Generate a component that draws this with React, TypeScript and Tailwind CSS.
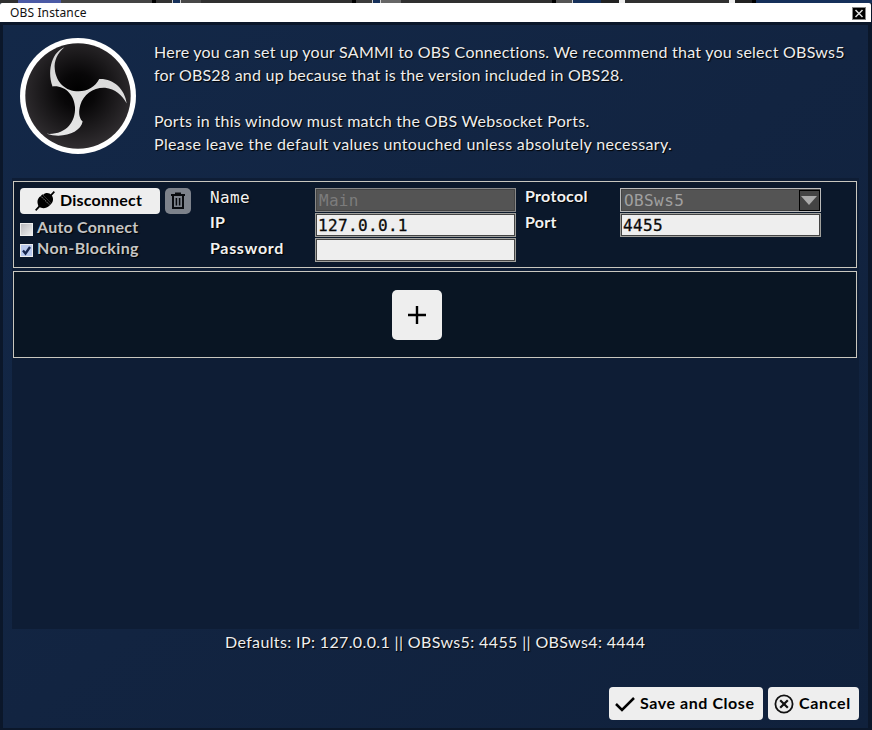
import React from 'react';

const bodyFont = "font-['Lato','Noto_Sans',sans-serif]";
const boldFont = "font-['Lato','Noto_Sans',sans-serif] font-bold";
const monoFont = "font-['DejaVu_Sans_Mono',monospace]";
const shadow = '[text-shadow:1px_1px_1px_#000]';

function ObsLogo() {
  return (
    <svg className="block h-[116px] w-[116px]" viewBox="28 23 350 350">
      <defs>
        <radialGradient id="disc" cx="50%" cy="45%" r="55%">
          <stop offset="0" stopColor="#000" />
          <stop offset="0.3" stopColor="#080708" />
          <stop offset="1" stopColor="#302d30" />
        </radialGradient>
        <linearGradient id="blade" x1="0" y1="0" x2="0" y2="1">
          <stop offset="0" stopColor="#d4d4d4" />
          <stop offset="1" stopColor="#e6e6e6" />
        </linearGradient>
      </defs>
      <circle cx="203" cy="198" r="175" fill="#fff" />
      <circle cx="203" cy="198" r="159" fill="url(#disc)" />
      <path
        d="M162 51C128 64 108 115 126 169C164 165 192 195 194 232C196 278 166 316 108 312C158 328 211 308 217 275C204 263 205 242 210 225C220 193 250 171 285 173C315 177 337 195 350 221C344 176 309 145 267 147C255 170 232 184 205 184C165 184 137 156 133 117C130 92 141 69 162 51Z"
        fill="url(#blade)"
      />
    </svg>
  );
}

function PlugIcon() {
  return (
    <svg className="h-[20px] w-[20px]" viewBox="0 0 60 60">
      <path d="M2 58L15 44M45 16L58 2" stroke="#000" strokeWidth="5" />
      <path d="M12 48C5 36 6 22 17 16L22 10L49 38L43 44C35 52 23 54 12 48Z" fill="#000" />
      <path d="M24 12C32 3 44 6 49 12C56 19 56 31 49 38Z" fill="#000" />
      <path d="M19 17L43 41" stroke="#ddd" strokeWidth="2" strokeDasharray="5 3" />
    </svg>
  );
}

function TrashIcon() {
  return (
    <svg className="h-[18px] w-[16px]" viewBox="0 0 16 18" fill="none" stroke="#080a0e">
      <path d="M1 3H15" strokeWidth="2" />
      <path d="M5 1.3H11" strokeWidth="1.6" />
      <path d="M3 4V16H13V4" strokeWidth="2" />
      <path d="M6.4 6V13.5M9.6 6V13.5" strokeWidth="1.5" />
    </svg>
  );
}

function Field({ value }: { value: string }) {
  return (
    <div
      className={`${monoFont} flex h-[24px] w-[201px] items-center border border-[#a0a09c] bg-[#eee] text-[16px] tracking-[0.35px] text-[#0a0a0a] shadow-[inset_0_0_0_1px_#444] [-webkit-text-stroke:0.3px_#0a0a0a]`}
    >
      <span className="pl-[2px] pt-px">{value}</span>
    </div>
  );
}

function Check({ on, label, tracking }: { on?: boolean; label: string; tracking: string }) {
  return (
    <div className={`flex h-[21px] items-center ${boldFont} text-[16px] text-[#c5c5c5] ${shadow}`}>
      <span
        className={`mr-1 mt-[3px] flex h-[13px] w-[13px] items-center justify-center border border-[#eee] ${on ? 'bg-[#b9c9ed]' : 'bg-gradient-to-br from-[#b9b9bd] to-[#eee]'}`}
      >
        {on && (
          <svg className="h-[11px] w-[11px]" viewBox="0 0 11 11">
            <path d="M2 5.5L4.5 8.5L9 2" fill="none" stroke="#17264e" strokeWidth="2.3" />
          </svg>
        )}
      </span>
      <span className={`-mt-px whitespace-nowrap ${tracking}`}>{label}</span>
    </div>
  );
}

export default function App() {
  return (
    <div className="flex h-[730px] w-[872px] flex-col overflow-hidden bg-[#0b172a]">
      <div className="flex h-[3px] shrink-0 bg-[#16305a]">
        <div className="w-[18px] bg-[#303030]" />
        <div className="w-[43px] bg-[#4b5aa5]" />
        <div className="w-[91px] bg-[#444]" />
        <div className="w-[20px] border-l-4 border-black bg-[#333]" />
        <div className="w-[9px] border-x border-[#ccc] bg-[#16305a]" />
        <div className="w-[20px] bg-[#484848]" />
        <div className="w-[151px] bg-[#303030]" />
        <div className="w-[20px] border-l-4 border-black bg-[#3c3c3c]" />
        <div className="w-[9px] border-x border-[#ccc] bg-[#16305a]" />
        <div className="w-[20px] bg-[#666]" />
        <div className="w-[151px] bg-[#303030]" />
        <div className="w-[20px] border-l-4 border-black bg-[#555]" />
        <div className="w-[29px] border-l border-[#ccc] bg-[#16305a]" />
        <div className="w-[18px] bg-[#222]" />
        <div className="w-[6px] bg-[#eee]" />
        <div className="w-[104px] bg-[#303030]" />
        <div className="w-[6px] bg-[#eee]" />
        <div className="w-[21px] border-r-4 border-black bg-[#222]" />
      </div>
      <div className="flex h-[19px] w-[871px] shrink-0 items-center justify-between rounded-t-[2px] bg-white pl-[10px] pr-[5px]">
        <span className="font-['Noto_Sans',sans-serif] text-[12px] leading-[19px] tracking-[0.13px] text-[#111]">OBS Instance</span>
        <span className="mt-[2px] flex h-[13px] w-[14px] items-center justify-center border border-[#888] bg-black">
          <svg className="h-[9px] w-[10px]" viewBox="0 0 10 9">
            <path d="M1.5 1L8.5 8M8.5 1L1.5 8" stroke="#ddd" strokeWidth="1.5" />
          </svg>
        </span>
      </div>
      <div className="mx-[3px] mr-[4px] mt-[3px] flex h-[703px] flex-col bg-gradient-to-br from-[#132848] via-[#122441] to-[#10213c]">
        <header className="flex h-[153px] shrink-0 pl-[17px] pt-[13px]">
          <ObsLogo />
          <div className={`${bodyFont} ml-[18px] mt-[2px] whitespace-nowrap text-[16px] leading-[23px] text-[#eee] ${shadow}`}>
            <p className="tracking-[0.24px]">Here you can set up your SAMMI to OBS Connections. We recommend that you select OBSws5</p>
            <p className="tracking-[0.22px]">for OBS28 and up because that is the version included in OBS28.</p>
            <p className="h-[23px]" />
            <p className="tracking-[0.3px]">Ports in this window must match the OBS Websocket Ports.</p>
            <p className="tracking-[0.35px]">Please leave the default values untouched unless absolutely necessary.</p>
          </div>
        </header>
        <main className="ml-[9px] flex h-[451px] w-[847px] shrink-0 flex-col gap-[3px] bg-[#0e1d35] px-px pt-[3px]">
          <section className="flex h-[87px] w-[844px] border border-[#c9c7bf] bg-[#0b182b] pl-[6px] pt-[6px]">
            <div className="w-[190px]">
              <div className="flex gap-[5px]">
                <button className={`flex h-[26px] w-[140px] items-center rounded-[4px] bg-[#eee] pl-[15px] ${boldFont} text-[16px] text-black`}>
                  <PlugIcon />
                  <span className="-mt-[2px] ml-[5px] tracking-[0.2px]">Disconnect</span>
                </button>
                <button className="flex h-[26px] w-[26px] items-center justify-center rounded-[5px] bg-[#7d828b]">
                  <TrashIcon />
                </button>
              </div>
              <div className="mt-[3px]">
                <Check label="Auto Connect" tracking="tracking-[0.22px]" />
                <Check on label="Non-Blocking" tracking="tracking-[0.35px]" />
              </div>
            </div>
            <div className={`w-[105px] ${boldFont} -mt-[5px] text-[16px] leading-[26px] text-[#f2f2f2] ${shadow}`}>
              <p className={`${monoFont} h-[26px] pt-[2px] font-normal tracking-[0.4px]`}>Name</p>
              <p className="tracking-[0.3px]">IP</p>
              <p className="tracking-[0.68px]">Password</p>
            </div>
            <div className="flex w-[210px] flex-col gap-px">
              <div className={`${monoFont} flex h-[24px] w-[201px] items-center border border-[#888] bg-[#545454] pl-[3px] pt-px text-[16px] tracking-[0.3px] text-[#7c7c7c] shadow-[inset_0_0_0_1px_#444]`}>Main</div>
              <Field value="127.0.0.1" />
              <Field value="" />
            </div>
            <div className={`w-[95px] ${boldFont} -mt-[5px] text-[16px] leading-[26px] text-[#f2f2f2] ${shadow}`}>
              <p className="tracking-[0.3px]">Protocol</p>
              <p className="tracking-[0.3px]">Port</p>
            </div>
            <div className="flex flex-col gap-px">
              <div className={`${monoFont} flex h-[24px] w-[201px] items-center justify-between border border-[#bbb] bg-[#545454] pl-[3px] text-[16px] text-[#a0a0a0] shadow-[inset_0_0_0_1px_#444]`}>
                <span className="pt-px tracking-[0.4px]">OBSws5</span>
                <span className="flex h-[21px] w-[21px] items-center justify-center border border-black bg-[#444]">
                  <svg className="mr-[2px] h-[9px] w-[16px] shrink-0" viewBox="0 0 16 9">
                    <path d="M0 0H16L8 9Z" fill="#aaa" />
                  </svg>
                </span>
              </div>
              <Field value="4455" />
            </div>
          </section>
          <section className="flex h-[87px] w-[844px] border border-[#c9c7bf] bg-[#091523] pl-[378px] pt-[18px]">
            <button className="flex h-[50px] w-[50px] items-center justify-center rounded-[5px] bg-[#eee]">
              <svg className="h-[18px] w-[18px]" viewBox="0 0 18 18">
                <path d="M0 9H18M9 0V18" stroke="#000" strokeWidth="2.4" />
              </svg>
            </button>
          </section>
        </main>
        <p className={`${bodyFont} ml-[222px] mt-px h-[24px] whitespace-nowrap text-[16px] leading-[23px] tracking-[0.37px] text-[#eee] ${shadow}`}>
          Defaults: IP: 127.0.0.1 || OBSws5: 4455 || OBSws4: 4444
        </p>
        <footer className={`mt-[33px] flex justify-end gap-[5px] pr-[9px] ${boldFont} text-[16px] text-black`}>
          <button className="flex h-[33px] w-[154px] items-center rounded-[4px] bg-[#eee] pl-[6px]">
            <svg className="h-[18px] w-[20px]" viewBox="0 0 20 18">
              <path d="M1 9L7 15L19 3" fill="none" stroke="#000" strokeWidth="2.5" />
            </svg>
            <span className="-mt-[2px] ml-[5px] whitespace-nowrap tracking-[0.56px]">Save and Close</span>
          </button>
          <button className="flex h-[33px] w-[91px] items-center rounded-[4px] bg-[#eee] pl-[6px]">
            <svg className="h-[20px] w-[20px]" viewBox="0 0 20 20" fill="none" stroke="#111">
              <circle cx="10" cy="10" r="8.6" strokeWidth="1.8" />
              <path d="M6.2 6.2L13.8 13.8M13.8 6.2L6.2 13.8" strokeWidth="2.2" />
            </svg>
            <span className="-mt-[2px] ml-[5px] tracking-[0.7px]">Cancel</span>
          </button>
        </footer>
      </div>
    </div>
  );
}
